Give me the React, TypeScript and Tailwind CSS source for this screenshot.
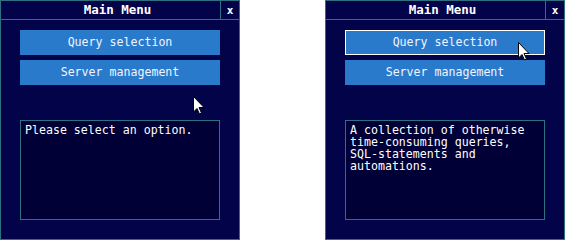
import React from "react";

const Cursor = () => (
  <svg width="12" height="19" viewBox="0 0 12 19" className="block">
    <path
      d="M0.5 0.5 L0.5 16 L4 12.5 L6.5 18 L8.5 17 L6 11.5 L11 11.5 Z"
      fill="#ffffff"
      stroke="#000000"
      strokeWidth="1"
    />
  </svg>
);

function Panel({
  text,
  hovered,
  cursor,
}: {
  text: string[];
  hovered: boolean;
  cursor: { left: number; top: number };
}) {
  return (
    <div className="relative w-[240px] h-[240px] bg-[#03034a] border border-[#2f7080] flex flex-col text-[#f2f4ff]">
      <div className="flex h-[19px] border-b border-[#2f7080]">
        <div className="flex-1 flex items-center justify-center pl-[14px] font-bold text-[12.5px] leading-none text-white">
          Main Menu
        </div>
        <div className="w-[19px] border-l border-[#2f7080] flex items-center justify-center font-bold text-[11px] leading-none text-white">
          x
        </div>
      </div>
      <div className="flex flex-col gap-[5px] px-[19px] pt-[10px]">
        <button
          className={`h-[25px] bg-[#2a7acb] flex items-center justify-center text-[11.6px] leading-none text-[#f2f4ff] ${
            hovered ? "border border-white" : ""
          }`}
        >
          Query selection
        </button>
        <button className="h-[25px] bg-[#2a7acb] flex items-center justify-center text-[11.6px] leading-none text-[#f2f4ff]">
          Server management
        </button>
      </div>
      <div className="mx-[19px] mt-[35px] h-[100px] bg-[#000036] border border-[#2f7080] px-[4px] pt-[3px] text-[11.6px] leading-[12px] text-white">
        {text.map((t, i) => (
          <div key={i} className="h-[12px] leading-[12px]">
            {t}
          </div>
        ))}
      </div>
      <div
        className="absolute"
        style={{ left: cursor.left, top: cursor.top }}
      >
        <Cursor />
      </div>
    </div>
  );
}

export default function App() {
  return (
    <div
      className="w-[565px] h-[240px] bg-white flex justify-between"
      style={{ fontFamily: '"DejaVu Sans Mono", monospace' }}
    >
      <Panel
        text={["Please select an option."]}
        hovered={false}
        cursor={{ left: 192, top: 95 }}
      />
      <Panel
        text={[
          "A collection of otherwise",
          "time-consuming queries,",
          "SQL-statements and",
          "automations.",
        ]}
        hovered={true}
        cursor={{ left: 192, top: 41 }}
      />
    </div>
  );
}
